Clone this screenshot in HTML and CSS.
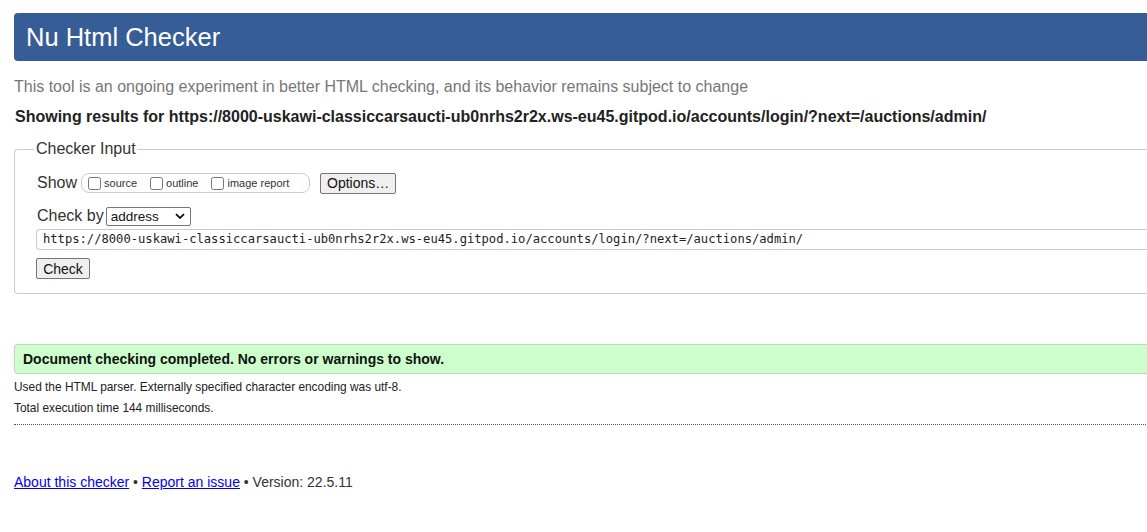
FILE: index.html
```html
<!DOCTYPE html>
<html lang="en">
<head>
<meta charset="utf-8">
<title>Nu Html Checker</title>
<link rel="stylesheet" href="styles.css">
</head>
<body>
<div class="page">
  <h1 class="title">Nu Html Checker</h1>
  <p class="intro">This tool is an ongoing experiment in better HTML checking, and its behavior remains subject to change</p>
  <p class="results-for">Showing results for https://8000-uskawi-classiccarsaucti-ub0nrhs2r2x.ws-eu45.gitpod.io/accounts/login/?next=/auctions/admin/</p>

  <fieldset class="checker">
    <legend class="checker-legend">Checker Input</legend>
    <div class="row show-row">
      <span class="row-label">Show</span>
      <span class="show-box">
        <label class="opt"><input type="checkbox" class="cb"><span>source</span></label>
        <label class="opt"><input type="checkbox" class="cb"><span>outline</span></label>
        <label class="opt"><input type="checkbox" class="cb"><span>image report</span></label>
      </span>
      <button class="btn options-btn" type="button">Options…</button>
    </div>
    <div class="row checkby-row">
      <span class="row-label">Check by</span>
      <span class="select">address<svg class="chev" width="10" height="7" viewBox="0 0 10 7"><path d="M1 1.2 L5 5 L9 1.2" fill="none" stroke="#111" stroke-width="1.8"/></svg></span>
    </div>
    <div class="url-input">https://8000-uskawi-classiccarsaucti-ub0nrhs2r2x.ws-eu45.gitpod.io/accounts/login/?next=/auctions/admin/</div>
    <button class="btn check-btn" type="button">Check</button>
  </fieldset>

  <p class="success">Document checking completed. No errors or warnings to show.</p>
  <p class="details">Used the HTML parser. Externally specified character encoding was utf-8.</p>
  <p class="details">Total execution time 144 milliseconds.</p>
  <hr class="dotted">

  <p class="footer"><a href="#">About this checker</a> • <a href="#">Report an issue</a> • Version: 22.5.11</p>
</div>
</body>
</html>
```
FILE: styles.css
```css
html, body {
  margin: 0;
  padding: 0;
  overflow: hidden;
  background: #fff;
}
body {
  font-family: "Liberation Sans", Arial, sans-serif;
  color: #222;
}
.page {
  width: 1200px;
  padding: 13px 0 0 14px;
}
.title {
  margin: 0;
  height: 48px;
  line-height: 48px;
  background: #365d95;
  color: #fff;
  font-size: 25.5px;
  font-weight: normal;
  padding-left: 12px;
  border-radius: 4px 0 0 4px;
}
.intro {
  margin: 17px 0 0;
  font-size: 16px;
  line-height: 18px;
  color: #777;
}
.results-for {
  margin: 12px 0 0 1px;
  font-size: 16px;
  line-height: 18px;
  font-weight: bold;
  color: #222;
}
.checker {
  margin: 14px 0 0;
  padding: 8px 0 14px 22px;
  border: 1px solid #ccc;
  border-radius: 4px 0 0 4px;
  border-right: none;
}
.checker-legend {
  font-size: 16px;
  padding: 0 1px 0 2px;
  margin-left: -3px;
  color: #333;
  line-height: 18px;
}
.row {
  display: flex;
  align-items: center;
}
.row-label {
  font-size: 16px;
  color: #333;
  line-height: 18px;
}
.show-row {
  height: 22px;
  margin-top: 6px;
}
.show-box {
  display: inline-flex;
  align-items: center;
  height: 18px;
  margin-left: 4px;
  padding: 0 6px 0 6px;
  border: 1px solid #ccc;
  border-radius: 8px;
  width: 215px;
}
.opt {
  display: inline-flex;
  align-items: center;
  font-size: 11px;
  color: #333;
  margin-right: 13px;
}
.opt:last-child { margin-right: 0; }
.cb {
  margin: 0 3px 0 0;
  width: 13px;
  height: 13px;
}
.btn {
  font-family: "Liberation Sans", Arial, sans-serif;
  font-size: 14px;
  color: #111;
  background: #efefef;
  border: 1px solid #767676;
  border-radius: 2px;
  padding: 0 6px;
  height: 21px;
}
.options-btn {
  margin-left: 10px;
  width: 76px;
}
.checkby-row {
  margin-top: 12px;
  height: 20px;
}
.select {
  display: inline-flex;
  align-items: center;
  justify-content: space-between;
  box-sizing: border-box;
  width: 85px;
  height: 19px;
  margin-left: 2px;
  padding: 0 4px 0 4px;
  border: 1px solid #767676;
  border-radius: 2px;
  font-size: 13.5px;
  color: #111;
}
.chev { margin-right: 1px; }
.url-input {
  margin: 3px 0 0 -1px;
  box-sizing: border-box;
  height: 21px;
  line-height: 19px;
  padding-left: 6px;
  border: 1px solid #ccc;
  border-right: none;
  border-radius: 4px 0 0 4px;
  font-family: "DejaVu Sans Mono", "Liberation Mono", monospace;
  font-size: 12.15px;
  color: #222;
  white-space: nowrap;
}
.check-btn {
  display: block;
  margin: 8px 0 0 -1px;
  width: 54px;
}
.success {
  margin: 50px 0 0;
  box-sizing: border-box;
  height: 30px;
  line-height: 28px;
  padding-left: 8px;
  background: #ccffcc;
  border: 1px solid #c0d4c0;
  border-right: none;
  border-radius: 4px 0 0 4px;
  font-size: 14px;
  font-weight: bold;
  color: #111;
}
.details {
  margin: 6px 0 0;
  font-size: 11.9px;
  line-height: 15px;
  color: #222;
}
.details + .details { margin-top: 6px; }
.dotted {
  margin: 8px 0 0;
  border: none;
  border-top: 1px dotted #555;
  height: 0;
}
.footer {
  margin: 49px 0 0;
  font-size: 14px;
  line-height: 16px;
  color: #333;
}
.footer a {
  color: #00e;
}
```
